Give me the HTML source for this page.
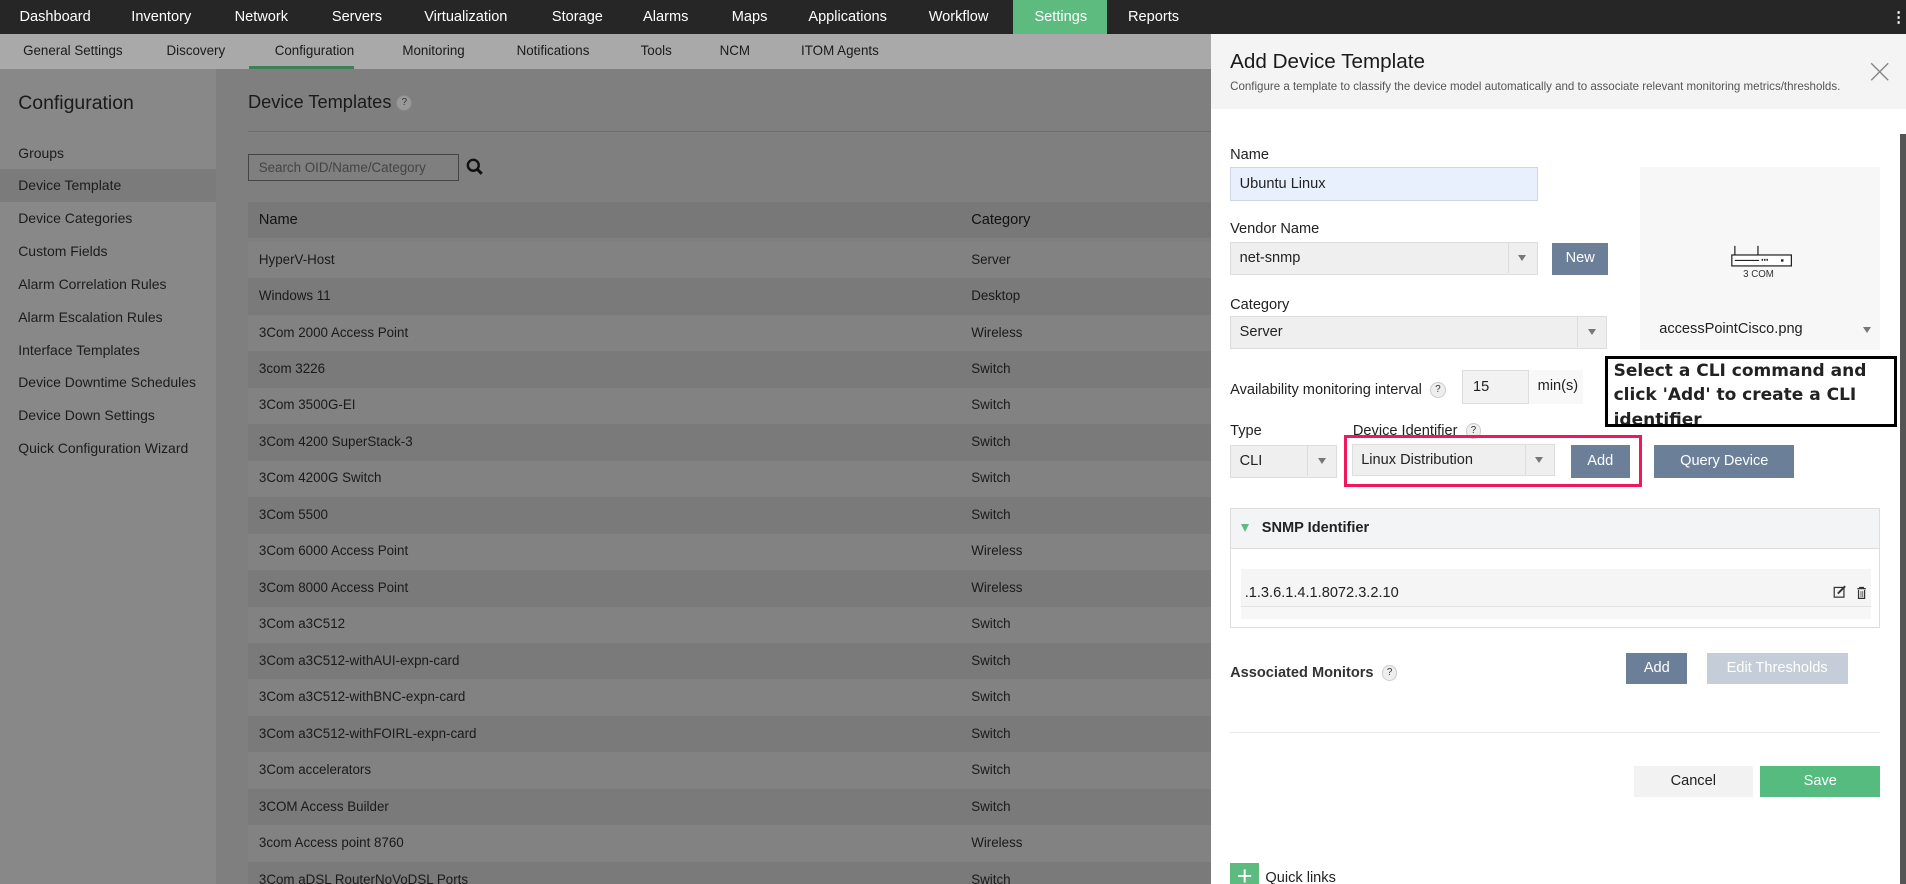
<!DOCTYPE html>
<html><head><meta charset="utf-8"><style>
*{box-sizing:border-box;margin:0;padding:0}
html,body{width:1906px;height:884px;overflow:hidden;background:#7f7f7f}
#w{zoom:1.21556;width:1568px;height:727px;position:relative;overflow:hidden;font-family:"Liberation Sans",sans-serif;font-size:12px;color:#222}
.a{position:absolute;white-space:nowrap}
#top{left:0;top:0;width:1568px;height:28px;background:#262626}
#top .a{top:7px;color:#fff;font-size:12px}
#sub{left:0;top:28px;width:1568px;height:29px;background:#a9a9a9}
#sub .a{top:7px;font-size:11px;color:#1a1a1a}
#side{left:0;top:57px;width:178px;height:670px;background:#888}
.si{left:15px;font-size:11.5px;color:#1c1c1c}
.row{left:204px;width:800px;height:30px}
.row span{position:absolute;top:8px;font-size:11px;color:#1a1a1a}
#panel{left:996px;top:28px;width:572px;height:699px;background:#fff}
.lbl{font-size:12px;color:#222}
.sel{background:#efefef;border:1px solid #ddd;height:27px}
.sel .t{position:absolute;left:7px;top:6px;font-size:12px}
.sel .ar{position:absolute;right:0;top:0;height:25px;width:24px;border-left:1px solid #ddd}
.sel .ar:after{content:"";position:absolute;left:8px;top:10px;border-left:4px solid transparent;border-right:4px solid transparent;border-top:5px solid #777}
.btn{background:#6b7f99;color:#fff;text-align:center;font-size:12px;height:26px;line-height:26px}
.q{display:inline-block;width:13px;height:13px;border-radius:50%;background:#eee;border:1px solid #ccc;font-size:8px;line-height:11px;text-align:center;color:#333;vertical-align:middle}
</style></head><body><div id="w">
<div class="a" id="top">
<span class="a" style="left:16px">Dashboard</span><span class="a" style="left:108px">Inventory</span><span class="a" style="left:193px">Network</span><span class="a" style="left:273px">Servers</span><span class="a" style="left:349px">Virtualization</span><span class="a" style="left:454px">Storage</span><span class="a" style="left:529px">Alarms</span><span class="a" style="left:602px">Maps</span><span class="a" style="left:665px">Applications</span><span class="a" style="left:764px">Workflow</span>
<div class="a" style="left:833px;top:0;width:78px;height:28px;background:#5dbb7f"></div><span class="a" style="left:851px">Settings</span><span class="a" style="left:928px">Reports</span><span class="a" style="left:1556px;font-weight:bold">&#8942;</span>
</div>
<div class="a" id="sub">
<span class="a" style="left:19px">General Settings</span><span class="a" style="left:137px">Discovery</span><span class="a" style="left:226px">Configuration</span><span class="a" style="left:331px">Monitoring</span><span class="a" style="left:425px">Notifications</span><span class="a" style="left:527px">Tools</span><span class="a" style="left:592px">NCM</span><span class="a" style="left:659px">ITOM Agents</span>
<div class="a" style="left:205px;top:26px;width:86px;height:3px;background:#3d7f56"></div>
</div>
<div class="a" id="side"></div>
<div class="a" style="left:15px;top:76px;font-size:16px;color:#1a1a1a">Configuration</div>
<div class="a" style="left:0;top:139px;width:178px;height:27px;background:#7b7b7b"></div>
<div class="a si" style="top:119px">Groups</div><div class="a si" style="top:146px">Device Template</div><div class="a si" style="top:173px">Device Categories</div><div class="a si" style="top:200px">Custom Fields</div><div class="a si" style="top:227px">Alarm Correlation Rules</div><div class="a si" style="top:254px">Alarm Escalation Rules</div><div class="a si" style="top:281px">Interface Templates</div><div class="a si" style="top:308px">Device Downtime Schedules</div><div class="a si" style="top:335px">Device Down Settings</div><div class="a si" style="top:362px">Quick Configuration Wizard</div>
<div class="a" style="left:204px;top:75px;font-size:15px;color:#1a1a1a">Device Templates <span class="q" style="background:#999;border-color:#888">?</span></div>
<div class="a" style="left:204px;top:108px;width:800px;height:1px;background:#6e6e6e"></div>
<div class="a" style="left:204px;top:127px;width:174px;height:22px;border:1px solid #444;font-size:11px;color:#444;padding:4px 0 0 8px">Search OID/Name/Category</div>
<svg class="a" style="left:383px;top:130px" width="15" height="15" viewBox="0 0 15 15"><circle cx="6" cy="6" r="4.5" fill="none" stroke="#111" stroke-width="2"/><path d="M9 9l4 4" stroke="#111" stroke-width="2.4"/></svg>
<div class="a" style="left:204px;top:166px;width:800px;height:30px;background:#787878"></div>
<div class="a" style="left:213px;top:174px;font-size:12px;color:#111">Name</div><div class="a" style="left:799px;top:174px;font-size:12px;color:#111">Category</div>
<div class="a row" style="top:199px;background:#828282"><span style="left:9px">HyperV-Host</span><span style="left:595px">Server</span></div>
<div class="a row" style="top:229px;background:#7a7a7a"><span style="left:9px">Windows 11</span><span style="left:595px">Desktop</span></div>
<div class="a row" style="top:259px;background:#828282"><span style="left:9px">3Com 2000 Access Point</span><span style="left:595px">Wireless</span></div>
<div class="a row" style="top:289px;background:#7a7a7a"><span style="left:9px">3com 3226</span><span style="left:595px">Switch</span></div>
<div class="a row" style="top:319px;background:#828282"><span style="left:9px">3Com 3500G-EI</span><span style="left:595px">Switch</span></div>
<div class="a row" style="top:349px;background:#7a7a7a"><span style="left:9px">3Com 4200 SuperStack-3</span><span style="left:595px">Switch</span></div>
<div class="a row" style="top:379px;background:#828282"><span style="left:9px">3Com 4200G Switch</span><span style="left:595px">Switch</span></div>
<div class="a row" style="top:409px;background:#7a7a7a"><span style="left:9px">3Com 5500</span><span style="left:595px">Switch</span></div>
<div class="a row" style="top:439px;background:#828282"><span style="left:9px">3Com 6000 Access Point</span><span style="left:595px">Wireless</span></div>
<div class="a row" style="top:469px;background:#7a7a7a"><span style="left:9px">3Com 8000 Access Point</span><span style="left:595px">Wireless</span></div>
<div class="a row" style="top:499px;background:#828282"><span style="left:9px">3Com a3C512</span><span style="left:595px">Switch</span></div>
<div class="a row" style="top:529px;background:#7a7a7a"><span style="left:9px">3Com a3C512-withAUI-expn-card</span><span style="left:595px">Switch</span></div>
<div class="a row" style="top:559px;background:#828282"><span style="left:9px">3Com a3C512-withBNC-expn-card</span><span style="left:595px">Switch</span></div>
<div class="a row" style="top:589px;background:#7a7a7a"><span style="left:9px">3Com a3C512-withFOIRL-expn-card</span><span style="left:595px">Switch</span></div>
<div class="a row" style="top:619px;background:#828282"><span style="left:9px">3Com accelerators</span><span style="left:595px">Switch</span></div>
<div class="a row" style="top:649px;background:#7a7a7a"><span style="left:9px">3COM Access Builder</span><span style="left:595px">Switch</span></div>
<div class="a row" style="top:679px;background:#828282"><span style="left:9px">3com Access point 8760</span><span style="left:595px">Wireless</span></div>
<div class="a row" style="top:709px;background:#7a7a7a"><span style="left:9px">3Com aDSL RouterNoVoDSL Ports</span><span style="left:595px">Switch</span></div>

<div class="a" id="panel"></div>
<div class="a" style="left:996px;top:28px;width:572px;height:62px;background:#f4f4f4"></div>
<div class="a" style="left:1012px;top:41px;font-size:17px;color:#1a1a1a">Add Device Template</div>
<div class="a" style="left:1012px;top:67px;font-size:9.5px;color:#555">Configure a template to classify the device model automatically and to associate relevant monitoring metrics/thresholds.</div>
<svg class="a" style="left:1538px;top:51px" width="16" height="16"><path d="M1 1L15 15M15 1L1 15" stroke="#888" stroke-width="1.2"/></svg>
<div class="a" style="left:1563px;top:110px;width:5px;height:617px;background:#555"></div>
<div class="a lbl" style="left:1012px;top:121px">Name</div>
<div class="a" style="left:1012px;top:137px;width:253px;height:28px;background:#e8f0fe;border:1px solid #cfd6e3;font-size:12px;padding:7px 0 0 7px">Ubuntu Linux</div>
<div class="a lbl" style="left:1012px;top:182px">Vendor Name</div>
<div class="a sel" style="left:1012px;top:199px;width:253px"><span class="t">net-snmp</span><span class="ar"></span></div>
<div class="a btn" style="left:1277px;top:200px;width:46px">New</div>
<div class="a lbl" style="left:1012px;top:244px">Category</div>
<div class="a sel" style="left:1012px;top:260px;width:310px"><span class="t">Server</span><span class="ar"></span></div>
<div class="a" style="left:1349px;top:137px;width:198px;height:151px;background:#f7f7f7"></div>
<svg class="a" style="left:1423px;top:198px" width="54" height="22"><path d="M4 4V12M23 4V12" stroke="#222"/><rect x="1.5" y="11.5" width="49" height="9" fill="#fff" stroke="#222"/><path d="M4 16H24" stroke="#222"/><path d="M26 15.5h6" stroke="#222" stroke-width="1.5" stroke-dasharray="1.2 0.8"/><rect x="42" y="15" width="2" height="2" fill="#222"/></svg>
<div class="a" style="left:1434px;top:221px;font-size:8px;color:#333">3 COM</div>
<div class="a" style="left:1365px;top:264px;font-size:12px">accessPointCisco.png</div>
<div class="a" style="left:1533px;top:269px;border-left:4px solid transparent;border-right:4px solid transparent;border-top:5px solid #777"></div>
<div class="a lbl" style="left:1012px;top:314px">Availability monitoring interval &nbsp;<span class="q">?</span></div>
<div class="a" style="left:1203px;top:304px;width:55px;height:28px;background:#f2f2f2;border:1px solid #ddd;font-size:12px;padding:7px 0 0 8px">15</div>
<div class="a" style="left:1258px;top:304px;width:44px;height:28px;background:#f8f8f8;font-size:12px;padding:7px 0 0 7px">min(s)</div>
<div class="a" style="left:1320px;top:293px;width:241px;height:58px;border:2.5px solid #000;background:#fff;font-family:'DejaVu Sans',sans-serif;font-weight:bold;font-size:14px;line-height:20px;padding:0 0 0 5px;white-space:normal;overflow:hidden">Select a CLI command and click 'Add' to create a CLI identifier</div>
<div class="a lbl" style="left:1012px;top:348px">Type</div>
<div class="a lbl" style="left:1113px;top:348px">Device Identifier &nbsp;<span class="q">?</span></div>
<div class="a sel" style="left:1012px;top:366px;width:88px"><span class="t">CLI</span><span class="ar"></span></div>
<div class="a" style="left:1106px;top:358px;width:245px;height:43px;border:3px solid #f0185a"></div>
<div class="a sel" style="left:1112px;top:365px;width:167px"><span class="t">Linux Distribution</span><span class="ar"></span></div>
<div class="a btn" style="left:1292px;top:366px;width:49px;height:27px;line-height:27px">Add</div>
<div class="a btn" style="left:1361px;top:366px;width:115px;height:27px;line-height:27px">Query Device</div>
<div class="a" style="left:1012px;top:418px;width:535px;height:99px;border:1px solid #ddd"></div>
<div class="a" style="left:1013px;top:419px;width:533px;height:33px;background:#f3f4f5;border-bottom:1px solid #ddd"></div>
<div class="a" style="left:1021px;top:431px;border-left:4px solid transparent;border-right:4px solid transparent;border-top:7px solid #5dbb7f"></div>
<div class="a" style="left:1038px;top:428px;font-size:12px;font-weight:bold;color:#222">SNMP Identifier</div>
<div class="a" style="left:1021px;top:468px;width:518px;height:31px;background:#f5f5f5;border-bottom:1px solid #e3e3e3"></div>
<div class="a" style="left:1021px;top:499px;width:518px;height:10px;background:#f7f7f7"></div>
<div class="a" style="left:1024px;top:481px;font-size:12px">.1.3.6.1.4.1.8072.3.2.10</div>
<svg class="a" style="left:1508px;top:481px" width="28" height="12"><rect x="1" y="2" width="8" height="8" fill="none" stroke="#333"/><path d="M4 7L10 1" stroke="#333" stroke-width="1.6"/><path d="M20 3h7M22 3V2h3v1M21 4v7h5V4" fill="none" stroke="#333"/><path d="M23 5v5M24.5 5v5" stroke="#333" stroke-width=".6"/></svg>
<div class="a" style="left:1012px;top:547px;font-size:12px;font-weight:bold;color:#333">Associated Monitors &nbsp;<span class="q" style="font-weight:normal">?</span></div>
<div class="a btn" style="left:1338px;top:537px;width:50px">Add</div>
<div class="a btn" style="left:1404px;top:537px;width:116px;background:#c5ced8">Edit Thresholds</div>
<div class="a" style="left:1012px;top:602px;width:535px;height:1px;background:#e8e8e8"></div>
<div class="a" style="left:1344px;top:630px;width:98px;height:26px;line-height:26px;text-align:center;background:#f2f2f2;font-size:12px">Cancel</div>
<div class="a" style="left:1448px;top:630px;width:99px;height:26px;line-height:26px;text-align:center;background:#55bb7f;color:#fff;font-size:12px">Save</div>
<div class="a" style="left:1012px;top:710px;width:24px;height:24px;background:#5dbb7f;color:#fff;font-size:22px;line-height:22px;text-align:center">+</div>
<div class="a" style="left:1041px;top:716px;font-size:12px">Quick links</div>
</div></body></html>
